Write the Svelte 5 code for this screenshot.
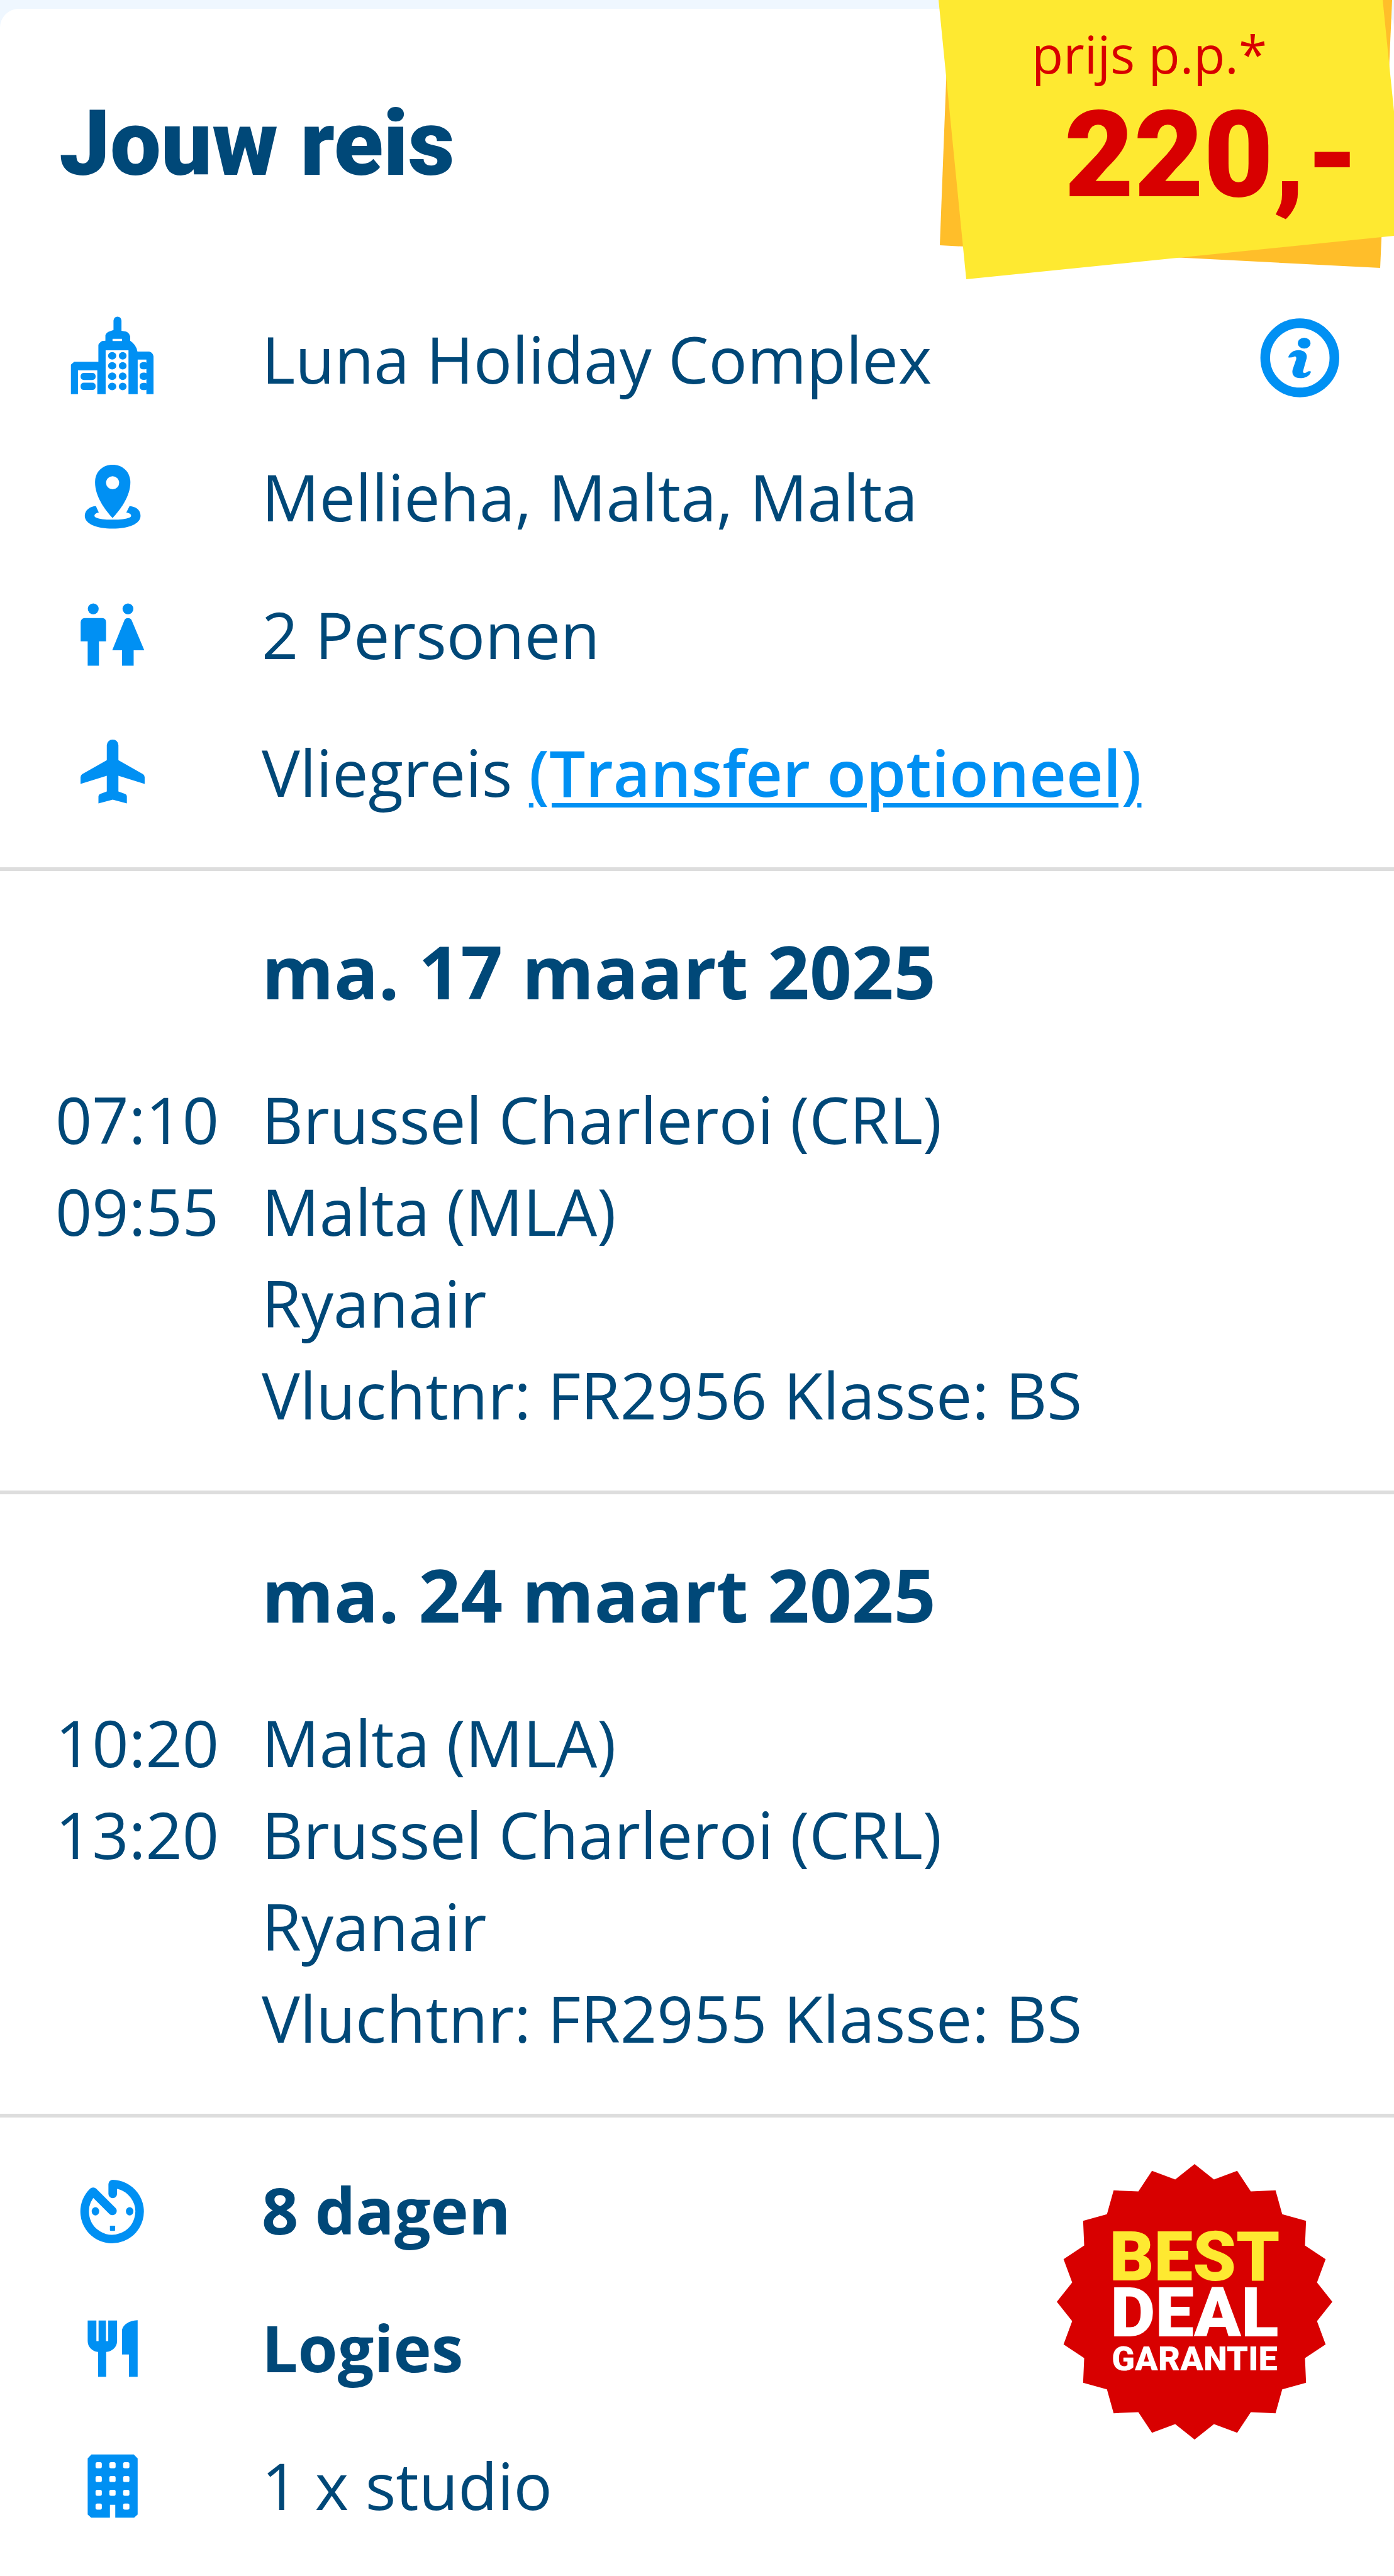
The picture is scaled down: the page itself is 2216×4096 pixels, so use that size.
<script lang="ts">
	interface Leg {
		time: string;
		text: string;
	}

	interface Flight {
		date: string;
		legs: Leg[];
	}

	const flights: Flight[] = [
		{
			date: 'ma. 17 maart 2025',
			legs: [
				{ time: '07:10', text: 'Brussel Charleroi (CRL)' },
				{ time: '09:55', text: 'Malta (MLA)' },
				{ time: '', text: 'Ryanair' },
				{ time: '', text: 'Vluchtnr: FR2956 Klasse: BS' }
			]
		},
		{
			date: 'ma. 24 maart 2025',
			legs: [
				{ time: '10:20', text: 'Malta (MLA)' },
				{ time: '13:20', text: 'Brussel Charleroi (CRL)' },
				{ time: '', text: 'Ryanair' },
				{ time: '', text: 'Vluchtnr: FR2955 Klasse: BS' }
			]
		}
	];

	// Twenty-pointed seal: outer and inner radius alternate every 9 degrees.
	const seal = Array.from({ length: 40 }, (_, i) => {
		const radius = i % 2 ? 197 : 219;
		const angle = (i * Math.PI) / 20;
		return `${(237 + radius * Math.sin(angle)).toFixed(1)},${(232 - radius * Math.cos(angle)).toFixed(1)}`;
	}).join(' ');
</script>

<main class="card">
	<header class="header">
		<h1>Jouw reis</h1>
		<div class="price">
			<svg class="ribbon" viewBox="0 0 726 444" aria-hidden="true">
				<path class="ribbon-back" d="M19 0H723L704 426 4 390Z" />
				<path class="ribbon-front" d="M2 0H708L726 177V375L46 444Z" />
			</svg>
			<span class="price-label">prijs p.p.*</span>
			<strong class="price-value">220,-</strong>
		</div>
	</header>

	<section class="summary">
		<ul class="rows">
			<li>
				<svg class="icon icon-large" viewBox="0 0 900 900" aria-hidden="true">
					<path
						d="M108 742V498L135 475H335V335Q338 322 365 303L393 300V255Q400 232 430 222L460 212V135Q463 105 493 102 523 105 526 135V218L565 225Q590 235 598 265V300Q650 335 658 390H755Q785 397 791 430V742H732V457H660V742H584V380H395V742H326V545H166V742ZM452 285V303H530V285Z"
						fill-rule="evenodd"
					/>
					<rect x="188" y="567" width="124" height="58" rx="26" />
					<rect x="188" y="648" width="124" height="60" rx="26" />
					{#each [425, 508, 594, 679] as y}
						<ellipse cx="449" cy={y} rx="34" ry="31" />
						<ellipse cx="536" cy={y} rx="32" ry="31" />
					{/each}
					{#each [507, 594, 679] as y}
						<rect x="676" y={y - 30} width="70" height="60" rx="28" />
					{/each}
				</svg>
				<span class="text">Luna Holiday Complex</span>
				<button type="button" class="info" aria-label="Informatie">
					<svg viewBox="0 0 960 900" aria-hidden="true">
						<circle cx="484" cy="442" r="286" fill="none" stroke="currentColor" stroke-width="80" />
						<ellipse cx="520" cy="321" rx="53" ry="45" />
						<path
							d="M388 438C400 398 435 378 473 378 520 378 548 405 541 443L511 552C507 569 522 573 542 560 555 551 571 550 577 556 566 590 532 610 486 610 438 610 416 582 424 541L454 454C458 438 450 426 436 433 420 440 400 440 388 438Z"
						/>
					</svg>
				</button>
			</li>
			<li>
				<svg class="icon" viewBox="0 0 780 780" aria-hidden="true">
					<path
						d="M390 565C330 500 245 390 245 270 245 185 305 125 390 125S537 185 537 270C537 390 450 500 390 565ZM390 220A53 53 0 1 0 390 328 53 53 0 1 0 390 220Z"
						fill-rule="evenodd"
					/>
					<path
						d="M252 467 276 520C252 524 240 535 240 547 240 566 300 579 390 579S543 566 543 547C543 532 528 524 503 520L530 467C585 470 621 500 621 547 621 614 520 653 390 653S160 614 160 547C160 500 205 468 252 467Z"
					/>
				</svg>
				<span class="text">Mellieha, Malta, Malta</span>
			</li>
			<li>
				<svg class="icon" viewBox="0 0 780 780" aria-hidden="true">
					<circle cx="230" cy="177" r="45" />
					<circle cx="517" cy="177" r="45" />
					<path d="M160 254H305Q335 256 336 287V446H277V648H184V446H126V287Q129 256 160 254Z" />
					<path d="M488 270Q497 254 517 254T547 270L652 520H564V648H468V520H387Z" />
				</svg>
				<span class="text">2 Personen</span>
			</li>
			<li>
				<svg class="icon" viewBox="0 0 780 780" aria-hidden="true">
					<path
						d="M342 165Q350 120 391 120T438 165V290L642 405Q655 415 655 430V486L438 418V549L495 569Q508 575 508 590V647L391 616 273 647V590Q273 575 286 569L342 549V418L125 486V430Q125 415 138 405L342 290Z"
					/>
				</svg>
				<span class="text">Vliegreis <a href="#transfer">(Transfer optioneel)</a></span>
			</li>
		</ul>
	</section>

	{#each flights as flight (flight.date)}
		<section class="flight">
			<h2>{flight.date}</h2>
			<table>
				<tbody>
					{#each flight.legs as leg}
						<tr>
							<td class="time">{leg.time}</td>
							<td>{leg.text}</td>
						</tr>
					{/each}
				</tbody>
			</table>
		</section>
	{/each}

	<section class="stay">
		<ul class="rows">
			<li>
				<svg class="icon" viewBox="0 0 780 780" aria-hidden="true">
					<path
						d="M389 398 229 239A227 227 0 1 0 391 176V257"
						fill="none"
						stroke="currentColor"
						stroke-width="71"
						stroke-linecap="round"
						stroke-linejoin="round"
					/>
					<ellipse cx="248" cy="401" rx="31" ry="34" />
					<ellipse cx="531" cy="401" rx="31" ry="34" />
					<rect x="368" y="520" width="43" height="43" rx="6" />
				</svg>
				<strong class="text">8 dagen</strong>
			</li>
			<li>
				<svg class="icon" viewBox="0 0 780 780" aria-hidden="true">
					<path
						d="M184 165H256V336H274V165H335V336H354V165H427V335C427 385 385 422 337 425V630H270V425C225 422 184 385 184 335Z"
					/>
					<path d="M597 163V630H525V446H468V240C480 200 525 165 597 163Z" />
				</svg>
				<strong class="text">Logies</strong>
			</li>
			<li>
				<svg class="icon" viewBox="0 0 780 780" aria-hidden="true">
					<path d="M215 134H565L597 166V630L568 657H412V550H368V657H213L184 630V166Z" />
					{#each [223, 337, 451, 565] as y}
						{#each [275, 389, 503] as x}
							{#if x !== 389 || y !== 565}
								<rect class="pane" x={x - 26} y={y - 25} width="52" height="50" rx="14" />
							{/if}
						{/each}
					{/each}
				</svg>
				<span class="text">1 x studio</span>
			</li>
		</ul>
		<svg class="seal" viewBox="0 0 473 473" role="img" aria-label="Best deal garantie">
			<polygon points={seal} />
			<text class="seal-best" x="237" y="198">BEST</text>
			<text class="seal-deal" x="237" y="287">DEAL</text>
			<text class="seal-small" x="237" y="341">GARANTIE</text>
		</svg>
	</section>
</main>

<style>
	:global(body) {
		background: #eff7ff;
		margin: 0;
	}

	.card {
		--navy: #004878;
		--blue: #0090f3;
		--red: #d80000;
		--yellow: #fee931;
		--line: #ddd;
		--display: Roboto, sans-serif;

		background: #fff;
		border-radius: 30px 30px 0 0;
		color: var(--navy);
		font-family: 'Open Sans', sans-serif;
		font-size: 102px;
		line-height: 146px;
		margin-top: 14px;
		position: relative;
	}

	.header {
		box-sizing: border-box;
		min-height: 447px;
		padding: 125px 94px 0;
	}

	h1 {
		font-family: var(--display);
		font-size: 144px;
		font-weight: 900;
		line-height: 180px;
		margin: 0;
	}

	/* The ribbon hangs over the top edge of the card. */
	.price {
		color: var(--red);
		display: flex;
		flex-direction: column;
		height: 444px;
		position: absolute;
		right: 0;
		top: -14px;
		width: 726px;
	}

	.ribbon {
		inset: 0;
		position: absolute;
	}

	.ribbon-back {
		fill: #ffbe2a;
	}

	.ribbon-front {
		fill: var(--yellow);
	}

	.price-label {
		font-size: 82px;
		line-height: 120px;
		padding: 25px 0 0 150px;
		position: relative;
	}

	.price-value {
		font-family: var(--display);
		font-size: 191px;
		font-weight: 900;
		line-height: 204px;
		padding-left: 202px;
		position: relative;
	}

	section {
		border-bottom: 6px solid var(--line);
	}

	.rows {
		flex: 1;
		list-style: none;
		margin: 0;
		padding: 0;
	}

	.rows li {
		align-items: center;
		display: grid;
		grid-template-columns: 356px 1fr auto;
		height: 219px;
		padding: 0 58px 0 60px;
	}

	.icon {
		color: var(--blue);
		fill: currentColor;
		height: 150px;
		margin-left: 44px;
		width: 150px;
	}

	.icon-large {
		height: 173px;
		margin-left: 32px;
		width: 173px;
	}

	.pane {
		fill: #fff;
	}

	a {
		color: var(--blue);
		font-weight: 600;
		text-decoration-thickness: 7px;
		text-underline-offset: 10px;
	}

	.info {
		background: none;
		border: 0;
		color: var(--blue);
		cursor: pointer;
		display: flex;
		padding: 0;

		& svg {
			fill: currentColor;
			height: 173px;
			width: 185px;
		}
	}

	.summary {
		padding-bottom: 42px;
	}

	.flight {
		padding: 86px 60px 79px 88px;
	}

	h2 {
		font-size: 117px;
		font-weight: 700;
		line-height: 146px;
		margin: 0 0 90px 328px;
	}

	table {
		border-collapse: collapse;
	}

	td {
		padding: 0;
	}

	.time {
		width: 328px;
	}

	.stay {
		border-bottom: 0;
		display: flex;
		padding: 37px 0 35px;
	}

	.seal {
		fill: var(--red);
		font-family: var(--display);
		font-weight: 900;
		height: 473px;
		margin: 24px 81px 0 0;
		text-anchor: middle;
		width: 473px;
	}

	.seal-best {
		fill: var(--yellow);
		font-size: 110px;
	}

	.seal-deal {
		fill: #fff;
		font-size: 110px;
	}

	.seal-small {
		fill: #fff;
		font-size: 54px;
	}
</style>
